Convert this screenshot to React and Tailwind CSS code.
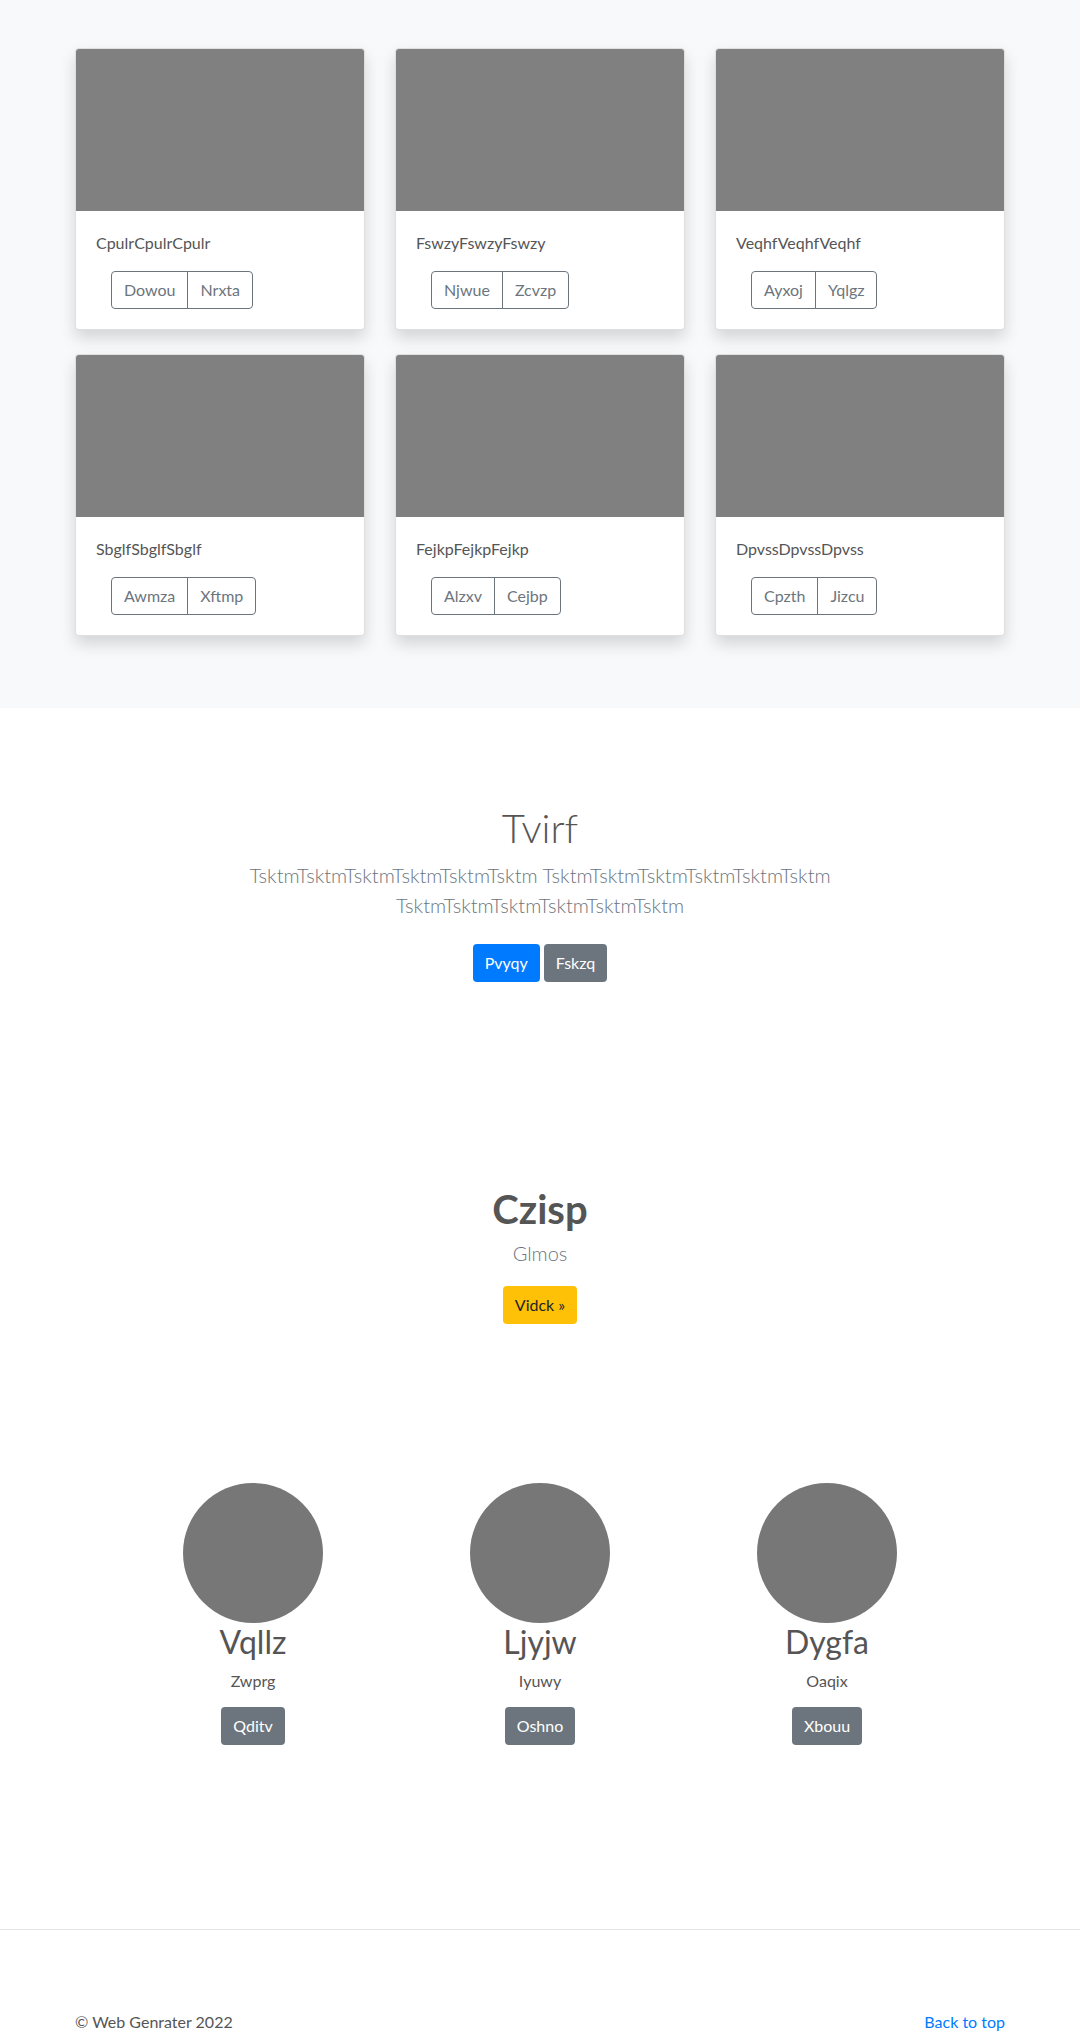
import React from 'react';

const cards = [
  { title: 'CpulrCpulrCpulr', a: 'Dowou', b: 'Nrxta' },
  { title: 'FswzyFswzyFswzy', a: 'Njwue', b: 'Zcvzp' },
  { title: 'VeqhfVeqhfVeqhf', a: 'Ayxoj', b: 'Yqlgz' },
  { title: 'SbglfSbglfSbglf', a: 'Awmza', b: 'Xftmp' },
  { title: 'FejkpFejkpFejkp', a: 'Alzxv', b: 'Cejbp' },
  { title: 'DpvssDpvssDpvss', a: 'Cpzth', b: 'Jizcu' },
];

const people = [
  { name: 'Vqllz', role: 'Zwprg', btn: 'Qditv' },
  { name: 'Ljyjw', role: 'Iyuwy', btn: 'Oshno' },
  { name: 'Dygfa', role: 'Oaqix', btn: 'Xbouu' },
];

const font = { fontFamily: 'Lato, "Open Sans", "Noto Sans", sans-serif' };

const Card = ({ title, a, b }) => (
  <div className="mb-6 overflow-hidden rounded border border-black/[0.125] bg-white shadow-[0_8px_16px_rgba(0,0,0,0.15)]">
    <div className="h-[162px] bg-[#808080]" />
    <div className="p-5">
      <p className="mb-4 text-base leading-6 text-[#555]">{title}</p>
      <div className="ml-[15px] inline-flex">
        <button className="h-[38px] rounded-l border border-[#6c757d] px-3 text-base text-[#6c757d]">{a}</button>
        <button className="-ml-px h-[38px] rounded-r border border-[#6c757d] px-3 text-base text-[#6c757d]">{b}</button>
      </div>
    </div>
  </div>
);

export default function App() {
  return (
    <div className="bg-white text-[#555]" style={font}>
      <section className="bg-[#f8f9fa] py-12">
        <div className="mx-auto grid w-[930px] grid-cols-3 gap-x-[30px]">
          {cards.map((c) => (
            <Card key={c.title} {...c} />
          ))}
        </div>
      </section>

      <section className="py-24 text-center">
        <h1 className="mb-2 text-[40px] font-light leading-[1.2] text-[#555]">Tvirf</h1>
        <p className="mx-auto max-w-[610px] text-xl font-light leading-[30px] text-[#6c757d]">
          TsktmTsktmTsktmTsktmTsktmTsktm TsktmTsktmTsktmTsktmTsktmTsktm TsktmTsktmTsktmTsktmTsktmTsktm
        </p>
        <div className="mb-6 mt-6 flex justify-center gap-1">
          <button className="h-[38px] rounded bg-[#007bff] px-3 text-base text-white">Pvyqy</button>
          <button className="h-[38px] rounded bg-[#6c757d] px-3 text-base text-white">Fskzq</button>
        </div>
      </section>

      <section className="pt-[83px] text-center">
        <h1 className="mb-[5px] text-[40px] font-bold leading-[1.2] text-[#555]">Czisp</h1>
        <p className="text-xl font-light leading-[30px] text-[#6c757d]">Glmos</p>
        <button className="mt-[18px] h-[38px] rounded bg-[#ffc107] px-3 text-base text-[#212529]">Vidck »</button>
      </section>

      <section className="pt-[159px]">
        <div className="mx-auto grid w-[861px] grid-cols-3 text-center">
          {people.map((p) => (
            <div key={p.name} className="flex flex-col items-center">
              <div className="h-[140px] w-[140px] rounded-full bg-[#777]" />
              <h2 className="mb-2 text-[32px] leading-[1.2] text-[#555]">{p.name}</h2>
              <p className="text-base leading-6 text-[#555]">{p.role}</p>
              <button className="mt-[14px] h-[38px] rounded bg-[#6c757d] px-3 text-base text-white">{p.btn}</button>
            </div>
          ))}
        </div>
      </section>

      <footer className="mt-[184px] border-t border-[#e5e5e5] pt-[80px] pb-12">
        <div className="mx-auto flex w-[930px] justify-between text-base leading-6">
          <p className="text-[#555]">© Web Genrater 2022</p>
          <a href="#" className="text-[#007bff]">Back to top</a>
        </div>
      </footer>
    </div>
  );
}
